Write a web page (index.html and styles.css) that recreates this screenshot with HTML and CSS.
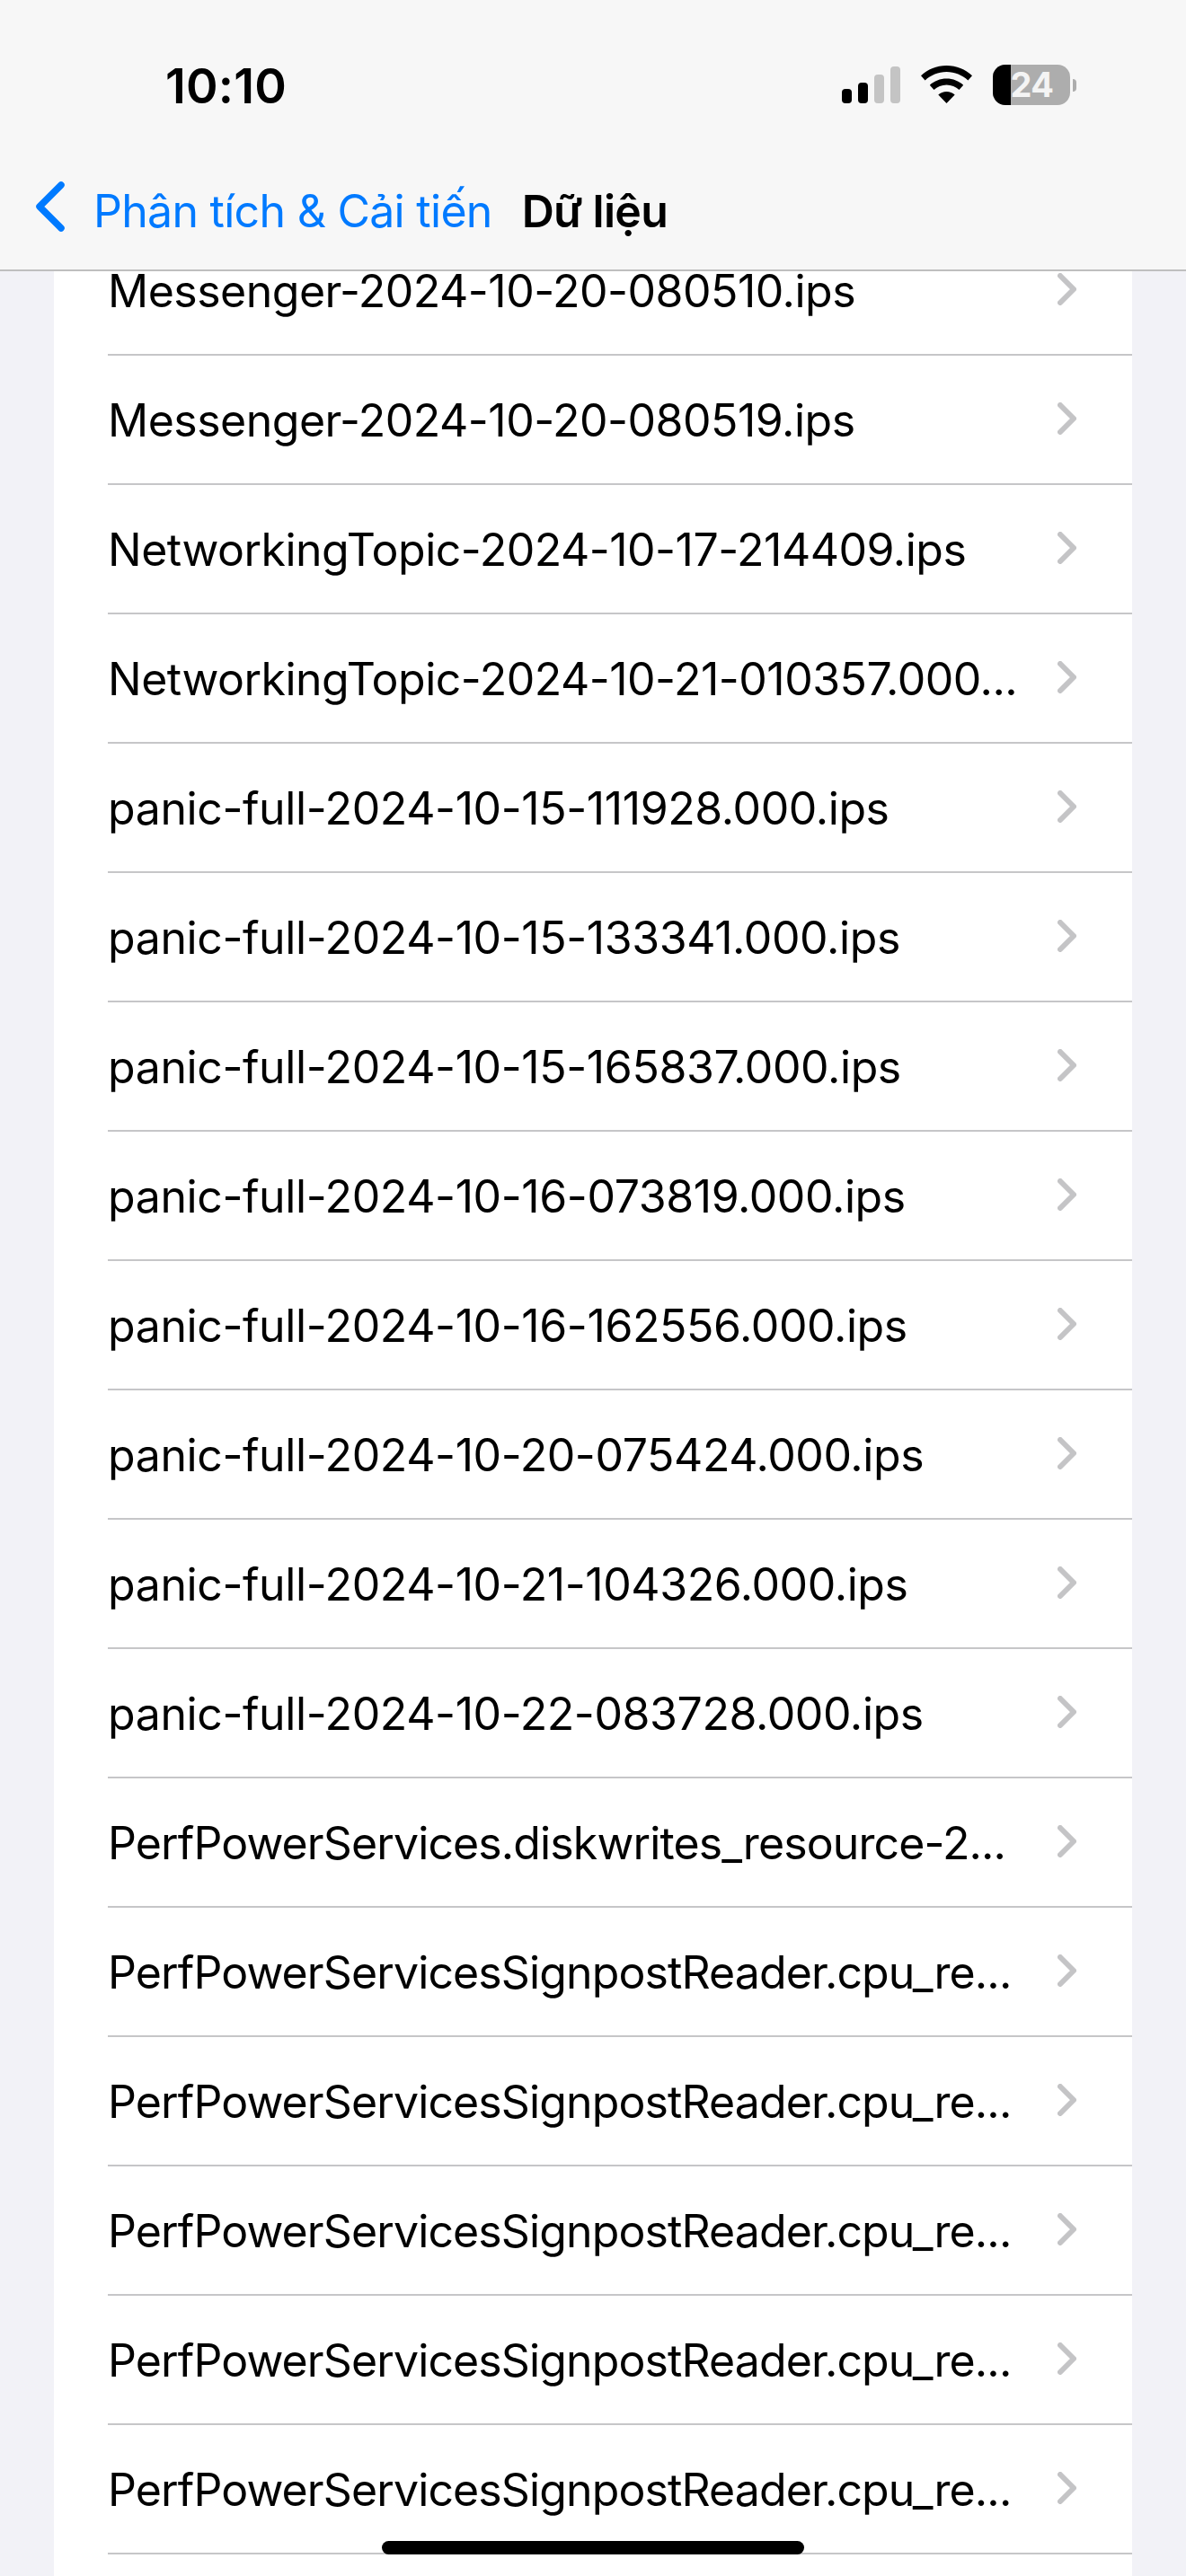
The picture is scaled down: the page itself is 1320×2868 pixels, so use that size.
FILE: index.html
```html
<!DOCTYPE html>
<html lang="vi">
<head>
<meta charset="utf-8">
<title>Dữ liệu</title>
<link rel="stylesheet" href="styles.css">
</head>
<body>
<div class="screen">
  <header class="topbar">
    <div class="status">
      <span class="time">10:10</span>
      <div class="status-icons">
        <svg class="signal" width="65" height="41" viewBox="0 0 65 41"><rect x="0" y="25" width="11" height="16" rx="4" fill="#000"/><rect x="18" y="18" width="11" height="23" rx="4" fill="#000"/><rect x="36" y="9" width="11" height="32" rx="4" fill="#c4c4c4"/><rect x="54" y="0" width="11" height="41" rx="4" fill="#c4c4c4"/></svg>
        <svg class="wifi" width="57" height="42" viewBox="0 0 57 42"><path d="M28.5 0C17.5 0 7.6 4.2 0 11.2l4.6 5.2C11 10.6 19.3 7 28.5 7s17.5 3.6 23.9 9.4l4.6-5.2C49.4 4.2 39.500 0 28.500 0z" fill="#000"/><path d="M28.500 14.500c-7.200 0-13.700 2.700-18.700 7.200l4.700 5.300c3.700-3.300 8.600-5.400 14-5.400s10.300 2.100 14 5.400l4.700-5.300c-5-4.500-11.500-7.200-18.700-7.200z" fill="#000"/><path d="M28.500 29c-3.500 0-6.700 1.300-9.200 3.500L28.500 42l9.200-9.500C35.200 30.300 32 29 28.500 29z" fill="#000"/></svg>
        <div class="battery">
          <div class="battery-body"><span class="battery-fill"></span><span class="battery-num">24</span></div>
          <span class="battery-cap"></span>
        </div>
      </div>
    </div>
    <nav class="navbar">
      <svg class="back-icon" width="32" height="56" viewBox="0 0 32 56"><path d="M28 4 4 28l24 24" fill="none" stroke="#007aff" stroke-width="7.500" stroke-linecap="round" stroke-linejoin="round"/></svg>
      <span class="back-label">Phân tích &amp; Cải tiến</span>
      <span class="nav-title">Dữ liệu</span>
    </nav>
  </header>
  <main class="content">
    <ul class="list">
      <li class="row"><span class="row-text">Messenger-2024-10-20-080510.ips</span><svg class="chev" width="21" height="36" viewBox="0 0 21 36"><path d="M3 3l15 15L3 33" fill="none" stroke="#c4c4c6" stroke-width="6" stroke-linecap="round" stroke-linejoin="round"/></svg></li>
      <li class="row"><span class="row-text">Messenger-2024-10-20-080519.ips</span><svg class="chev" width="21" height="36" viewBox="0 0 21 36"><path d="M3 3l15 15L3 33" fill="none" stroke="#c4c4c6" stroke-width="6" stroke-linecap="round" stroke-linejoin="round"/></svg></li>
      <li class="row"><span class="row-text">NetworkingTopic-2024-10-17-214409.ips</span><svg class="chev" width="21" height="36" viewBox="0 0 21 36"><path d="M3 3l15 15L3 33" fill="none" stroke="#c4c4c6" stroke-width="6" stroke-linecap="round" stroke-linejoin="round"/></svg></li>
      <li class="row"><span class="row-text">NetworkingTopic-2024-10-21-010357.000...</span><svg class="chev" width="21" height="36" viewBox="0 0 21 36"><path d="M3 3l15 15L3 33" fill="none" stroke="#c4c4c6" stroke-width="6" stroke-linecap="round" stroke-linejoin="round"/></svg></li>
      <li class="row"><span class="row-text row-text-wide">panic-full-2024-10-15-111928.000.ips</span><svg class="chev" width="21" height="36" viewBox="0 0 21 36"><path d="M3 3l15 15L3 33" fill="none" stroke="#c4c4c6" stroke-width="6" stroke-linecap="round" stroke-linejoin="round"/></svg></li>
      <li class="row"><span class="row-text row-text-wide">panic-full-2024-10-15-133341.000.ips</span><svg class="chev" width="21" height="36" viewBox="0 0 21 36"><path d="M3 3l15 15L3 33" fill="none" stroke="#c4c4c6" stroke-width="6" stroke-linecap="round" stroke-linejoin="round"/></svg></li>
      <li class="row"><span class="row-text row-text-wide">panic-full-2024-10-15-165837.000.ips</span><svg class="chev" width="21" height="36" viewBox="0 0 21 36"><path d="M3 3l15 15L3 33" fill="none" stroke="#c4c4c6" stroke-width="6" stroke-linecap="round" stroke-linejoin="round"/></svg></li>
      <li class="row"><span class="row-text row-text-wide">panic-full-2024-10-16-073819.000.ips</span><svg class="chev" width="21" height="36" viewBox="0 0 21 36"><path d="M3 3l15 15L3 33" fill="none" stroke="#c4c4c6" stroke-width="6" stroke-linecap="round" stroke-linejoin="round"/></svg></li>
      <li class="row"><span class="row-text row-text-wide">panic-full-2024-10-16-162556.000.ips</span><svg class="chev" width="21" height="36" viewBox="0 0 21 36"><path d="M3 3l15 15L3 33" fill="none" stroke="#c4c4c6" stroke-width="6" stroke-linecap="round" stroke-linejoin="round"/></svg></li>
      <li class="row"><span class="row-text row-text-wide">panic-full-2024-10-20-075424.000.ips</span><svg class="chev" width="21" height="36" viewBox="0 0 21 36"><path d="M3 3l15 15L3 33" fill="none" stroke="#c4c4c6" stroke-width="6" stroke-linecap="round" stroke-linejoin="round"/></svg></li>
      <li class="row"><span class="row-text row-text-wide">panic-full-2024-10-21-104326.000.ips</span><svg class="chev" width="21" height="36" viewBox="0 0 21 36"><path d="M3 3l15 15L3 33" fill="none" stroke="#c4c4c6" stroke-width="6" stroke-linecap="round" stroke-linejoin="round"/></svg></li>
      <li class="row"><span class="row-text row-text-wide">panic-full-2024-10-22-083728.000.ips</span><svg class="chev" width="21" height="36" viewBox="0 0 21 36"><path d="M3 3l15 15L3 33" fill="none" stroke="#c4c4c6" stroke-width="6" stroke-linecap="round" stroke-linejoin="round"/></svg></li>
      <li class="row"><span class="row-text row-text-tight">PerfPowerServices.diskwrites_resource-2...</span><svg class="chev" width="21" height="36" viewBox="0 0 21 36"><path d="M3 3l15 15L3 33" fill="none" stroke="#c4c4c6" stroke-width="6" stroke-linecap="round" stroke-linejoin="round"/></svg></li>
      <li class="row"><span class="row-text row-text-tight">PerfPowerServicesSignpostReader.cpu_re...</span><svg class="chev" width="21" height="36" viewBox="0 0 21 36"><path d="M3 3l15 15L3 33" fill="none" stroke="#c4c4c6" stroke-width="6" stroke-linecap="round" stroke-linejoin="round"/></svg></li>
      <li class="row"><span class="row-text row-text-tight">PerfPowerServicesSignpostReader.cpu_re...</span><svg class="chev" width="21" height="36" viewBox="0 0 21 36"><path d="M3 3l15 15L3 33" fill="none" stroke="#c4c4c6" stroke-width="6" stroke-linecap="round" stroke-linejoin="round"/></svg></li>
      <li class="row"><span class="row-text row-text-tight">PerfPowerServicesSignpostReader.cpu_re...</span><svg class="chev" width="21" height="36" viewBox="0 0 21 36"><path d="M3 3l15 15L3 33" fill="none" stroke="#c4c4c6" stroke-width="6" stroke-linecap="round" stroke-linejoin="round"/></svg></li>
      <li class="row"><span class="row-text row-text-tight">PerfPowerServicesSignpostReader.cpu_re...</span><svg class="chev" width="21" height="36" viewBox="0 0 21 36"><path d="M3 3l15 15L3 33" fill="none" stroke="#c4c4c6" stroke-width="6" stroke-linecap="round" stroke-linejoin="round"/></svg></li>
      <li class="row"><span class="row-text row-text-tight">PerfPowerServicesSignpostReader.cpu_re...</span><svg class="chev" width="21" height="36" viewBox="0 0 21 36"><path d="M3 3l15 15L3 33" fill="none" stroke="#c4c4c6" stroke-width="6" stroke-linecap="round" stroke-linejoin="round"/></svg></li>
      <li class="row row-blank"></li>
    </ul>
  </main>
  <div class="home-indicator"></div>
</div>
</body>
</html>
```
FILE: styles.css
```css
* { box-sizing: border-box; }
html, body { margin: 0; padding: 0; }
body {
  width: 1320px;
  height: 2868px;
  overflow: hidden;
  background: #f2f2f7;
  font-family: Inter, "Liberation Sans", sans-serif;
  color: #000;
}
.screen {
  position: relative;
  display: flex;
  flex-direction: column;
  width: 1320px;
  height: 2868px;
  overflow: hidden;
}
.topbar {
  flex: none;
  height: 302px;
  background: #f7f7f7;
  border-bottom: 2px solid #bfbfbf;
}
.status {
  display: flex;
  align-items: flex-start;
  justify-content: space-between;
  height: 190px;
  padding: 0 122px 0 184px;
}
.time {
  margin-top: 66px;
  font-size: 54px;
  line-height: 60px;
  font-weight: 600;
  letter-spacing: 0.2px;
}
.status-icons {
  display: flex;
  align-items: flex-end;
  gap: 23px;
  height: 117px;
}
.signal, .wifi { margin-bottom: 2px; }
.battery {
  display: flex;
  align-items: center;
  gap: 3px;
  margin-bottom: 0;
}
.battery-body {
  position: relative;
  display: flex;
  align-items: center;
  justify-content: center;
  width: 86px;
  height: 45px;
  overflow: hidden;
  border-radius: 14px;
  background: #adadad;
}
.battery-fill {
  position: absolute;
  left: 0;
  top: 0;
  bottom: 0;
  width: 20px;
  background: #000;
}
.battery-num {
  position: relative;
  margin-left: 1px;
  font-size: 38px;
  line-height: 45px;
  font-weight: 700;
  color: #f4f4f4;
  letter-spacing: -0.5px;
}
.battery-cap {
  width: 4px;
  height: 14px;
  border-radius: 0 7px 7px 0;
  background: #adadad;
}
.navbar {
  display: flex;
  align-items: center;
  height: 70px;
  padding-left: 40px;
  margin-top: 10px;
}
.back-icon { flex: none; margin-top: -10px; }
.back-label {
  margin-left: 32px;
  font-size: 50px;
  line-height: 60px;
  color: #007aff;
  letter-spacing: -0.72px;
}
.nav-title {
  margin-left: 33px;
  font-size: 50px;
  line-height: 60px;
  font-weight: 600;
  letter-spacing: -0.7px;
}
.content {
  flex: 1;
  min-height: 0;
  overflow: hidden;
  padding: 0 60px;
}
.list {
  list-style: none;
  margin: -50px 0 0;
  padding: 0 0 0 60px;
  background: #fff;
}
.row {
  display: flex;
  align-items: center;
  justify-content: space-between;
  height: 144px;
  padding: 0 62px 2px 0;
  border-bottom: 2px solid #c6c6c8;
}
.row-text {
  padding-top: 3px;
  font-size: 50px;
  line-height: 60px;
  letter-spacing: -0.5px;
  white-space: nowrap;
}
.row-text-wide { letter-spacing: -0.4px; }
.row-text-tight { letter-spacing: -0.88px; }
.chev { flex: none; }
.home-indicator {
  position: absolute;
  left: 425px;
  top: 2829px;
  width: 470px;
  height: 15px;
  border-radius: 8px;
  background: #000;
}
```
